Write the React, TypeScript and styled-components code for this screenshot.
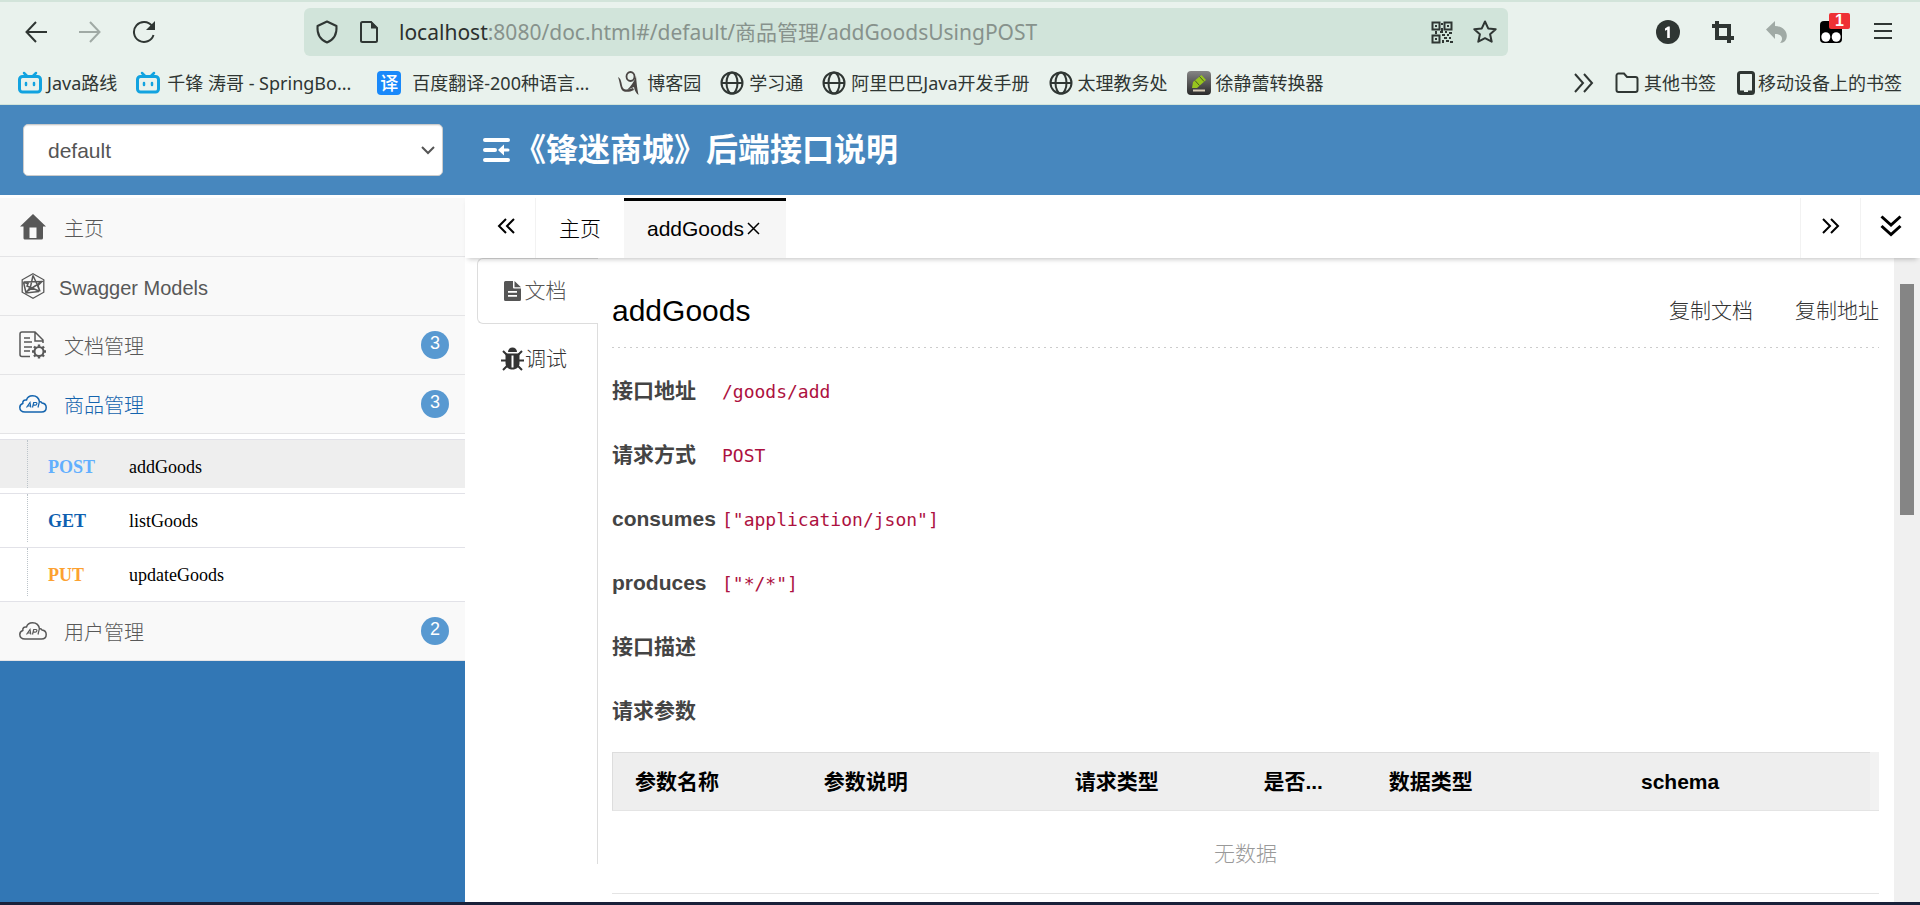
import React from 'react';
import styled, { createGlobalStyle } from 'styled-components';

const uiFont = `'Liberation Sans', 'Noto Sans CJK SC', sans-serif`;
const chromeFont = `'Noto Sans', 'Noto Sans CJK SC', sans-serif`;

const GlobalStyle = createGlobalStyle`
  *, *::before, *::after { box-sizing: border-box; }
  body { margin: 0; background: #fff; font-family: ${uiFont}; font-size: 21px; font-weight: 300; color: #000; }
  button { border: 0; padding: 0; margin: 0; background: none; font: inherit; color: inherit; cursor: pointer; }
  ul, dl, dd, h1, h2 { margin: 0; padding: 0; list-style: none; }
  a { color: inherit; text-decoration: none; }
  svg { display: block; flex: none; }
`;

/* ---------- page frame ---------- */

const Page = styled.div`
  display: flex;
  flex-direction: column;
  min-height: 100vh;
  border-bottom: 3px solid #19213a;
`;

const Browser = styled.header`
  background: #e9f2ed;
  border-top: 2px solid #d2e4da;
  border-bottom: 1px solid #d2e4da;
  color: #2f3633;
  font-family: ${chromeFont};
  font-weight: 400;
`;

const Toolbar = styled.div`
  display: flex;
  align-items: center;
  height: 60px;
  padding: 0 28px 0 24px;
`;

const NavButtons = styled.div`
  display: flex;
  gap: 30px;
  flex: 0 0 280px;
`;

const IconButton = styled.button<{ $dim?: boolean }>`
  display: flex;
  position: relative;
  color: ${p => (p.$dim ? '#a0aaa5' : '#2f3633')};
`;

const AddressBar = styled.div`
  display: flex;
  align-items: center;
  gap: 20px;
  flex: 0 1 1204px;
  min-width: 0;
  height: 48px;
  padding: 0 11px;
  border-radius: 6px;
  background: #d1e4da;
`;

const Address = styled.span`
  flex: 1;
  overflow: hidden;
  white-space: nowrap;
  font-size: 21px;
  line-height: 30px;
  color: #87928c;
`;

const Host = styled.span`
  color: #2b302e;
`;

const Extensions = styled.div`
  display: flex;
  align-items: center;
  gap: 32px;
  margin-left: auto;
`;

const Count = styled.span`
  position: absolute;
  top: -8px;
  right: -8px;
  width: 21px;
  height: 16px;
  border-radius: 2px;
  background: #ee3135;
  color: #fff;
  font: bold 16px/16px 'Liberation Sans', sans-serif;
  text-align: center;
`;

const Bookmarks = styled.nav`
  display: flex;
  align-items: center;
  gap: 19px;
  height: 42px;
  padding: 0 18px;
  font-size: 18px;
  line-height: 26px;
  white-space: nowrap;
`;

const Bookmark = styled.a<{ $wide?: boolean; $gap?: number }>`
  display: flex;
  align-items: center;
  gap: ${p => p.$gap ?? 5}px;
  ${p => p.$wide && 'width: 222px;'}
`;

const BookmarkEnd = styled.div`
  display: flex;
  align-items: center;
  gap: 21px;
  margin-left: auto;
`;

const Favicon = styled.span`
  width: 24px;
  height: 24px;
  border-radius: 4px;
  background: #1989fa;
  color: #fff;
  font-size: 18px;
  font-weight: 500;
  line-height: 24px;
  text-align: center;
`;

const AppHeader = styled.div`
  display: flex;
  align-items: center;
  height: 90px;
  padding: 0 23px;
  background: #4787be;
  color: #fff;
`;

const GroupField = styled.label`
  display: grid;
  align-items: center;
  flex: 0 0 420px;
  margin-right: 40px;
  color: #555;
  & > * { grid-area: 1 / 1; }
  & > svg { justify-self: end; margin-right: 8px; pointer-events: none; }
`;

const GroupSelect = styled.select`
  appearance: none;
  width: 100%;
  height: 52px;
  padding: 0 24px;
  border: 1px solid #ccc;
  border-radius: 5px;
  background: #fff;
  box-shadow: inset 0 1px 1px rgba(0, 0, 0, 0.08);
  font: 21px ${uiFont};
  color: #555;
`;

const AppTitle = styled.h1`
  margin-left: 4px;
  font-size: 32px;
  line-height: 44px;
  font-weight: bold;
`;

const Body = styled.div`
  display: flex;
  flex: 1;
`;

/* ---------- left menu ---------- */

const Sidebar = styled.nav`
  flex: 0 0 465px;
  background: #3277b5;
`;

const Menu = styled.ul`
  border-top: 3px solid #fff;
`;

const MenuLink = styled.a<{ $active?: boolean }>`
  display: flex;
  align-items: center;
  height: 59px;
  padding: 0 16px;
  border-bottom: 1px solid #e4e4e6;
  background: #f9f9f9;
  color: ${p => (p.$active ? '#1464ae' : '#585858')};
  font-size: 20px;
  line-height: 28px;
`;

const MenuIcon = styled.span`
  display: flex;
  justify-content: center;
  width: 34px;
  margin-right: 9px;
`;

const MenuText = styled.span<{ $cjk?: boolean }>`
  flex: 1;
  padding: 4px 0 0 ${p => (p.$cjk ? 5 : 0)}px;
`;

const Badge = styled.span`
  width: 28px;
  height: 28px;
  border-radius: 14px;
  background: #5899d1;
  color: #fff;
  font-size: 18px;
  line-height: 24px;
  text-align: center;
`;

const SubMenu = styled.ul`
  padding-top: 5px;
  border-bottom: 1px solid #e2e2e8;
  background: #fff;
`;

const SubItem = styled.li`
  border-top: 1px solid #e2e2e8;
  padding-bottom: 5px;
`;

const SubLink = styled.a<{ $active?: boolean }>`
  display: flex;
  height: 48px;
  background: ${p => (p.$active ? '#eee' : '#fff')};
  font: 18px/24px 'Liberation Serif', serif;
  color: #000;
  &::before {
    content: '';
    width: 28px;
    margin-right: 20px;
    border-right: 1px dotted #bcc4ca;
  }
`;

const Method = styled.b<{ $color: string }>`
  width: 81px;
  padding-top: 15px;
  color: ${p => p.$color};
`;

const SubText = styled.span`
  padding-top: 15px;
`;

/* ---------- main area ---------- */

const Main = styled.main`
  display: flex;
  flex-direction: column;
  flex: 1;
  min-width: 0;
`;

const TabBar = styled.div`
  display: flex;
  position: relative;
  z-index: 1;
  height: 63px;
  padding-top: 3px;
  background: #fff;
  box-shadow: 0 4px 5px -3px rgba(0, 0, 0, 0.25);
`;

const TabArrow = styled.button<{ $side: 'left' | 'right' }>`
  display: flex;
  align-items: center;
  justify-content: center;
  width: ${p => (p.$side === 'left' ? 71 : 60)}px;
  padding: ${p => (p.$side === 'left' ? '0 0 4px 12px' : '0 0 4px')};
  border: 0 solid #f2f2f2;
  ${p => (p.$side === 'left' ? 'border-right-width: 1px;' : 'border-left-width: 1px;')}
`;

const PageTab = styled.button<{ $active?: boolean }>`
  display: flex;
  align-items: center;
  gap: 3px;
  padding: 0 23px 2px;
  border-top: 3px solid ${p => (p.$active ? '#000' : 'transparent')};
  background: ${p => (p.$active ? '#f6f6f6' : '#fff')};
  line-height: 30px;
`;

const Spacer = styled.div`
  flex: 1;
`;

const Content = styled.div`
  display: flex;
  flex: 1;
  padding-left: 12px;
`;

const SideTabs = styled.div`
  display: flex;
  flex-direction: column;
  flex: 0 0 121px;
  margin-bottom: 38px;
`;

const SideTab = styled.button<{ $active?: boolean }>`
  display: flex;
  align-items: center;
  justify-content: center;
  gap: ${p => (p.$active ? 4 : 1)}px;
  width: 100%;
  height: 66px;
  padding-right: 6px;
  line-height: 30px;
  color: ${p => (p.$active ? '#555' : '#333')};
  ${p => p.$active && 'border: 1px solid #ddd; border-right: 0; border-radius: 6px 0 0 6px;'}
`;

const SideRest = styled.div`
  flex: 1;
  padding-top: 2px;
  border-right: 1px solid #ddd;
`;

const Doc = styled.article`
  flex: 1;
  min-width: 0;
  padding: 0 15px 8px 14px;
`;

const DocHead = styled.div`
  display: flex;
  align-items: center;
  gap: 42px;
  height: 90px;
  padding-top: 16px;
  background: repeating-linear-gradient(90deg, #ccc 0 2px, transparent 2px 6px) bottom / 100% 1px no-repeat;
`;

const DocTitle = styled.h2`
  flex: 1;
  font-size: 30px;
  line-height: 36px;
  font-weight: normal;
`;

const CopyButton = styled.button`
  color: #333;
  line-height: 30px;
`;

const Fields = styled.dl`
  padding: 11px 0 9px;
`;

const Field = styled.div`
  display: flex;
  align-items: center;
  height: 64px;
`;

const Term = styled.dt`
  width: 110px;
  color: #444;
  font-weight: bold;
  line-height: 30px;
`;

const Value = styled.dd`
  padding-top: 2px;
  color: #ad1140;
  font: 18px/26px 'DejaVu Sans Mono', monospace;
`;

const Params = styled.table`
  width: 100%;
  table-layout: fixed;
  border-collapse: separate;
  border-spacing: 0;
`;

const Col = styled.col<{ $w: string }>`
  width: ${p => p.$w};
`;

const HeadCell = styled.th`
  height: 59px;
  padding: 0 0 0 23px;
  border: 0 solid #ddd;
  border-width: 1px 0;
  border-bottom-color: #e4e4e4;
  background: #eee;
  text-align: left;
  line-height: 30px;
  &:first-child { border-left-width: 1px; padding-left: 22px; }
`;

const GutterCell = styled.td`
  padding: 0;
  border-bottom: 1px solid #e4e4e4;
  background: #f2f2f2;
`;

const EmptyCell = styled.td`
  height: 83px;
  padding: 0;
  border-bottom: 1px solid #e4e4e4;
  text-align: center;
  color: #999;
`;

const ScrollTrack = styled.div`
  flex: 0 0 26px;
  padding: 26px 6px 0;
  background: #f0f0f0;
`;

const ScrollThumb = styled.div`
  width: 14px;
  height: 231px;
  background: #858585;
`;

/* ---------- icons ---------- */

type LineProps = { size?: number; w?: number; h?: number; sw?: number; box?: string; children: React.ReactNode };
const Line = ({ size = 24, w, h, sw = 2, box = '0 0 24 24', children }: LineProps) => (
  <svg width={w ?? size} height={h ?? size} viewBox={box} fill="none" stroke="currentColor" strokeWidth={sw} aria-hidden="true">
    {children}
  </svg>
);

const BackIcon = () => <Line><path d="M23 12H3M12 2 2.500 12 12 22" /></Line>;
const ForwardIcon = () => <Line><path d="M1 12h20M12 2l9.500 10L12 22" /></Line>;
const ReloadIcon = () => (
  <Line>
    <path d="M21.500 15A10 10 0 1 1 20 6" />
    <path d="M23 1v9h-9z" fill="currentColor" stroke="none" />
  </Line>
);
const ShieldIcon = () => <Line><path d="M12 1.500 21.500 6c.5 7-2 13.500-9.500 16.500C4.500 19.500 2 13 2.500 6z" strokeLinejoin="round" /></Line>;
const PageIcon = () => (
  <Line w={20} box="0 0 20 24">
    <path d="M3.500 2H12l6 6v12.500a1.500 1.500 0 0 1-1.500 1.500h-13A1.500 1.500 0 0 1 2 20.500v-17A1.500 1.500 0 0 1 3.500 2z" />
    <path d="M12 1v7.500h7z" fill="currentColor" stroke="none" />
  </Line>
);
const QrIcon = () => (
  <Line w={22} box="0 0 22 24" sw={2}>
    <path d="M1.500 2.500h7v7h-7zM13.500 2.500h7v7h-7zM1.500 15.500h7v7h-7z" />
    <path d="M4 5h2v2H4zM16 5h2v2h-2zM4 18h2v2H4zM10 3h2v2h-2zM10 8h2v3h-2zM4 11h2v3H4zM9 11h3v2H9zM14 11h2v2h-2zM18 12h3v2h-3zM11 14h3v2h-3zM16 14h2v2h-2zM13 17h3v2h-3zM18 17h2v2h-2zM11 20h2v3h-2zM15 20h3v2h-3zM19 21h3v2h-3z" fill="currentColor" stroke="none" />
  </Line>
);
const StarIcon = () => <Line><path d="M12 1.500l3.200 6.900 7.500.8-5.600 5 1.600 7.500L12 18.200l-6.700 3.500 1.600-7.500-5.600-5 7.500-.8z" strokeLinejoin="round" /></Line>;
const OneIcon = () => (
  <svg width="24" height="24" viewBox="0 0 24 24" aria-hidden="true">
    <circle cx="12" cy="12" r="12" fill="#2f3633" />
    <path d="M9 8.500 12 6.500h1.800V18h-2.600V9.700L9 10.800z" fill="#fff" />
  </svg>
);
const CropIcon = () => <Line w={22} h={22} box="0 0 22 22" sw={4}><path d="M0 5h17v12M5 0v17h17M17 12v10" /></Line>;
const UndoIcon = () => <Line w={22} h={22} box="0 0 22 22"><path d="M9 0v5c9 0 15 8 10 15-1 1-3 2-5 2 4-4 2-9-5-9v5L0 8.500z" fill="currentColor" stroke="none" /></Line>;
const MonkeyIcon = () => (
  <svg width="22" height="22" viewBox="0 0 22 22" aria-hidden="true">
    <path d="M4 0h14a4 4 0 0 1 4 4v14a4 4 0 0 1-4 4H4a4 4 0 0 1-4-4V4a4 4 0 0 1 4-4z" fill="#000" />
    <ellipse cx="5.800" cy="16" rx="4.500" ry="4.800" fill="#fff" />
    <ellipse cx="16.200" cy="16" rx="4.500" ry="4.800" fill="#fff" />
  </svg>
);
const BurgerIcon = () => <Line w={18} box="0 0 18 24"><path d="M0 4h18M0 11h18M0 18h18" /></Line>;
const TvIcon = () => (
  <svg width="24" height="24" viewBox="0 0 24 24" fill="none" stroke="#12a3e0" strokeWidth="3" strokeLinecap="round" aria-hidden="true">
    <rect x="1.500" y="5.500" width="21" height="15.500" rx="3" />
    <path d="M6 2l3 3M18 2l-3 3M8 12v2M16 12v2" strokeWidth="2.500" />
  </svg>
);
const CnblogsIcon = () => (
  <svg width="24" height="24" viewBox="0 0 24 24" fill="none" stroke="#4a4543" strokeWidth="2" aria-hidden="true">
    <ellipse cx="12.500" cy="5.500" rx="4" ry="4.500" strokeWidth="1.800" />
    <path d="M0 6c2 1 3 3 3.500 6s1 5 2.500 6c3 1 6 .5 9-1l1 2c-4 2-8 2.500-11 1C2 18 2 11 0 6z" fill="#4a4543" stroke="none" />
    <path d="M18 5c.5 6 1 12 2.500 19-2.500-2-4-4.500-4.500-8l-7 3c4-4 7-8 9-14z" fill="#4a4543" stroke="none" />
  </svg>
);
const GlobeIcon = () => (
  <Line>
    <circle cx="12" cy="12" r="10.500" />
    <ellipse cx="12" cy="12" rx="5.500" ry="10.500" />
    <path d="M1.500 12h21" />
  </Line>
);
const PencilIcon = () => (
  <svg width="24" height="24" viewBox="0 0 24 24" aria-hidden="true">
    <defs>
      <linearGradient id="pencilBack" x1="0" y1="0" x2="0" y2="1">
        <stop offset="0" stopColor="#858585" />
        <stop offset="1" stopColor="#2a2a2a" />
      </linearGradient>
    </defs>
    <rect width="24" height="24" rx="4" fill="url(#pencilBack)" />
    <path d="M5 17l1-6 8.500-7 4.500 5-9 8z" fill="#97c51e" />
    <path d="M8 9.500l4.500 5M12.500 5.500l4.500 5" stroke="#4a5a20" strokeWidth="1" />
    <path d="M6 19.500h12" stroke="#d8cdb8" strokeWidth="2" />
  </svg>
);
const MoreIcon = () => <Line w={20} box="0 0 20 24"><path d="M1 3l8 9-8 9M10 3l8 9-8 9" /></Line>;
const FolderIcon = () => <Line><path d="M1.500 19V4.500a2 2 0 0 1 2-2H9l3 3.500h8.500a2 2 0 0 1 2 2v11a2 2 0 0 1-2 2h-17a2 2 0 0 1-2-2z" /></Line>;
const PhoneIcon = () => (
  <Line w={18} box="0 0 18 24" sw={3}>
    <rect x="1.500" y="1.500" width="15" height="21" rx="2" />
    <path d="M1.500 21h5.500M11 21h5.500M6 22.500h6" />
  </Line>
);
const ChevronIcon = () => <Line w={14} h={10} box="0 0 14 10"><path d="M1 2l6 6 6-6" /></Line>;
const FoldIcon = () => (
  <Line w={27} h={24} box="0 0 27 24" sw={4}>
    <path d="M2 2h23M2 12h10M2 22h23" strokeLinecap="round" />
    <path d="M18 12h7" strokeWidth="3" strokeLinecap="round" />
    <path d="M15 12l6-5.500v11z" fill="currentColor" stroke="none" />
  </Line>
);
const HomeIcon = () => (
  <svg width="26" height="26" viewBox="0 0 26 26" fill="currentColor" aria-hidden="true">
    <path d="M13 0 26 12.500h-3V24a1.500 1.500 0 0 1-1.500 1.500h-17A1.500 1.500 0 0 1 3.500 24V12.500H0zM9.500 13.500v10.500h7V13.500z" fillRule="evenodd" />
  </svg>
);
const ModelsIcon = () => (
  <Line w={24} h={26} box="0 0 24 26" sw={1}>
    <path d="M12 .8l10.800 6v12.400L12 25.200 1.200 19.200V6.800z" strokeWidth="1.300" />
    <path d="M12 2.500 9.500 14 5 20M12 2.500l3 6.500 4 9.500M2.500 9l18.500-.5L5 19M2.500 9l5 2M2.500 9 5 20l13-1.500M7.500 9.500 6 13l12 5M21 8.500l-4 4 2 6" strokeWidth="1.500" />
  </Line>
);
const DocsIcon = () => (
  <Line w={28} h={28} box="0 0 28 28" sw={1.500}>
    <path d="M11 25.500H3a2 2 0 0 1-2-2V3a2 2 0 0 1 2-2h13l8 8v3M16 1v9h8M5 7h6M5 11h8M5 16h8M5 20h6" />
    <circle cx="20" cy="20.500" r="4.500" strokeWidth="2" />
    <path d="M20 13.500v2M20 25.500v2M13 20.500h2M25 20.500h2M15 15.500l1.500 1.500M23.500 24l1.500 1.500M25 15.500 23.500 17M16.500 24 15 25.500" strokeWidth="2.400" />
  </Line>
);
const CloudIcon = () => (
  <Line w={28} h={18} box="0 0 28 18" sw={1.500}>
    <path d="M6 17C2.500 17 .8 15 .8 12.500c0-2 1.200-3.500 3-4C3.500 6 5 4.500 7.500 5c.7-2.500 3-4.200 6-4.200 4 0 6.500 2.700 7 6.200 1-.4 2-.1 2.500 1 2.500.3 4.200 2 4.200 4.500 0 2.700-1.700 4.500-4.700 4.500z" />
    <path d="M7.500 12.500l3.500-5 .8 5M9 11h2.500M13.500 12.500l1.200-5h2.300c1.500 0 1 2.700-.7 2.700h-2M19 12.500l1.200-5" strokeWidth="1.200" />
  </Line>
);
const DoubleLeft = () => <Line w={18} h={16} box="0 0 18 16" sw={2}><path d="M9 1 2 8l7 7M17 1l-7 7 7 7" /></Line>;
const DoubleRight = () => <Line w={18} h={16} box="0 0 18 16" sw={2}><path d="M1 1l7 7-7 7M9 1l7 7-7 7" /></Line>;
const DoubleDown = () => <Line w={22} h={22} box="0 0 22 22" sw={3}><path d="M1.500 1.500 11 10l9.500-8.500M1.500 11 11 19.500l9.500-8.500" /></Line>;
const CloseIcon = () => <Line w={16} h={13} box="0 0 16 13" sw={1.500}><path d="M1 1l11 11M12 1 1 12" /></Line>;
const FileIcon = () => (
  <svg width="17" height="20" viewBox="0 0 17 20" fill="currentColor" aria-hidden="true">
    <path fillRule="evenodd" d="M1.500 0H9v6.500a1 1 0 0 0 1 1h7v11A1.500 1.500 0 0 1 15.500 20h-14A1.500 1.500 0 0 1 0 18.500v-17A1.500 1.500 0 0 1 1.500 0zM4 10v1.700h9V10zm0 4v1.700h9V14zM10.500 0 17 6.200h-6.500z" />
  </svg>
);
const BugIcon = () => (
  <svg width="23" height="24" viewBox="0 0 23 24" fill="none" stroke="currentColor" strokeWidth="2" aria-hidden="true">
    <path d="M7 5a4.500 4.500 0 0 1 9 0z" fill="currentColor" stroke="none" />
    <path d="M4.500 6.500h14V16c0 4-3 6.500-7 6.500s-7-2.500-7-6.500zM10.500 8.500v12h2v-12z" fillRule="evenodd" fill="currentColor" stroke="none" />
    <path d="M2 4l4 4M21 4l-4 4M0 13.500h6M23 13.500h-6M2 23l5-5M21 23l-5-5" />
  </svg>
);

/* ---------- data ---------- */

const bookmarks = [
  { text: 'Java路线', icon: <TvIcon /> },
  { text: '千锋 涛哥 - SpringBo...', icon: <TvIcon />, wide: true, gap: 7 },
  { text: '百度翻译-200种语言...', icon: <Favicon>译</Favicon>, wide: true, gap: 11 },
  { text: '博客园', icon: <CnblogsIcon /> },
  { text: '学习通', icon: <GlobeIcon /> },
  { text: '阿里巴巴Java开发手册', icon: <GlobeIcon /> },
  { text: '太理教务处', icon: <GlobeIcon /> },
  { text: '徐静蕾转换器', icon: <PencilIcon /> },
];

const apis = [
  { method: 'POST', name: 'addGoods', color: '#61affe' },
  { method: 'GET', name: 'listGoods', color: '#0f5fb0' },
  { method: 'PUT', name: 'updateGoods', color: '#fca130' },
];

const fields = [
  ['接口地址', '/goods/add'],
  ['请求方式', 'POST'],
  ['consumes', '["application/json"]'],
  ['produces', '["*/*"]'],
  ['接口描述', ''],
  ['请求参数', ''],
];

const columns = [
  ['参数名称', '14.9%'],
  ['参数说明', '19.8%'],
  ['请求类型', '14.9%'],
  ['是否...', '9.9%'],
  ['数据类型', '19.9%'],
  ['schema', 'auto'],
];

type MenuRowProps = { icon: React.ReactNode; text: string; count?: number; active?: boolean; latin?: boolean };
const MenuRow = ({ icon, text, count, active, latin }: MenuRowProps) => (
  <MenuLink href="#" $active={active}>
    <MenuIcon>{icon}</MenuIcon>
    <MenuText $cjk={!latin}>{text}</MenuText>
    {count !== undefined && <Badge>{count}</Badge>}
  </MenuLink>
);

export default function App() {
  return (
    <Page>
      <GlobalStyle />
      <Browser>
        <Toolbar>
          <NavButtons>
            <IconButton aria-label="后退"><BackIcon /></IconButton>
            <IconButton $dim aria-label="前进"><ForwardIcon /></IconButton>
            <IconButton aria-label="刷新"><ReloadIcon /></IconButton>
          </NavButtons>
          <AddressBar>
            <ShieldIcon />
            <PageIcon />
            <Address><Host>localhost</Host>:8080/doc.html#/default/商品管理/addGoodsUsingPOST</Address>
            <IconButton aria-label="二维码"><QrIcon /></IconButton>
            <IconButton aria-label="收藏"><StarIcon /></IconButton>
          </AddressBar>
          <Extensions>
            <IconButton aria-label="通知"><OneIcon /></IconButton>
            <IconButton aria-label="截图"><CropIcon /></IconButton>
            <IconButton $dim aria-label="撤销"><UndoIcon /></IconButton>
            <IconButton aria-label="脚本"><MonkeyIcon /><Count>1</Count></IconButton>
            <IconButton aria-label="菜单"><BurgerIcon /></IconButton>
          </Extensions>
        </Toolbar>
        <Bookmarks>
          {bookmarks.map(b => (
            <Bookmark key={b.text} href="#" $wide={b.wide} $gap={b.gap}>{b.icon}{b.text}</Bookmark>
          ))}
          <BookmarkEnd>
            <IconButton aria-label="更多书签"><MoreIcon /></IconButton>
            <Bookmark href="#"><FolderIcon />其他书签</Bookmark>
            <Bookmark href="#" $gap={3}><PhoneIcon />移动设备上的书签</Bookmark>
          </BookmarkEnd>
        </Bookmarks>
      </Browser>

      <AppHeader>
        <GroupField>
          <GroupSelect aria-label="分组" defaultValue="default">
            <option value="default">default</option>
          </GroupSelect>
          <ChevronIcon />
        </GroupField>
        <FoldIcon />
        <AppTitle>《锋迷商城》后端接口说明</AppTitle>
      </AppHeader>

      <Body>
        <Sidebar>
          <Menu>
            <li><MenuRow icon={<HomeIcon />} text="主页" /></li>
            <li><MenuRow icon={<ModelsIcon />} text="Swagger Models" latin /></li>
            <li><MenuRow icon={<DocsIcon />} text="文档管理" count={3} /></li>
            <li>
              <MenuRow icon={<CloudIcon />} text="商品管理" count={3} active />
              <SubMenu>
                {apis.map((a, i) => (
                  <SubItem key={a.name}>
                    <SubLink href="#" $active={i === 0}>
                      <Method $color={a.color}>{a.method}</Method>
                      <SubText>{a.name}</SubText>
                    </SubLink>
                  </SubItem>
                ))}
              </SubMenu>
            </li>
            <li><MenuRow icon={<CloudIcon />} text="用户管理" count={2} /></li>
          </Menu>
        </Sidebar>

        <Main>
          <TabBar>
            <TabArrow $side="left" aria-label="向左"><DoubleLeft /></TabArrow>
            <PageTab>主页</PageTab>
            <PageTab $active>addGoods<CloseIcon /></PageTab>
            <Spacer />
            <TabArrow $side="right" aria-label="向右"><DoubleRight /></TabArrow>
            <TabArrow $side="right" aria-label="更多"><DoubleDown /></TabArrow>
          </TabBar>
          <Content>
            <SideTabs>
              <SideTab $active><FileIcon />文档</SideTab>
              <SideRest>
                <SideTab><BugIcon />调试</SideTab>
              </SideRest>
            </SideTabs>
            <Doc>
              <DocHead>
                <DocTitle>addGoods</DocTitle>
                <CopyButton>复制文档</CopyButton>
                <CopyButton>复制地址</CopyButton>
              </DocHead>
              <Fields>
                {fields.map(([term, value]) => (
                  <Field key={term}>
                    <Term>{term}</Term>
                    <Value>{value}</Value>
                  </Field>
                ))}
              </Fields>
              <Params>
                <colgroup>
                  {columns.map(([name, w]) => <Col key={name} $w={w} />)}
                  <Col $w="9px" />
                </colgroup>
                <thead>
                  <tr>
                    {columns.map(([name]) => <HeadCell key={name} scope="col">{name}</HeadCell>)}
                    <GutterCell />
                  </tr>
                </thead>
                <tbody>
                  <tr><EmptyCell colSpan={7}>无数据</EmptyCell></tr>
                </tbody>
              </Params>
            </Doc>
            <ScrollTrack aria-hidden="true"><ScrollThumb /></ScrollTrack>
          </Content>
        </Main>
      </Body>
    </Page>
  );
}
